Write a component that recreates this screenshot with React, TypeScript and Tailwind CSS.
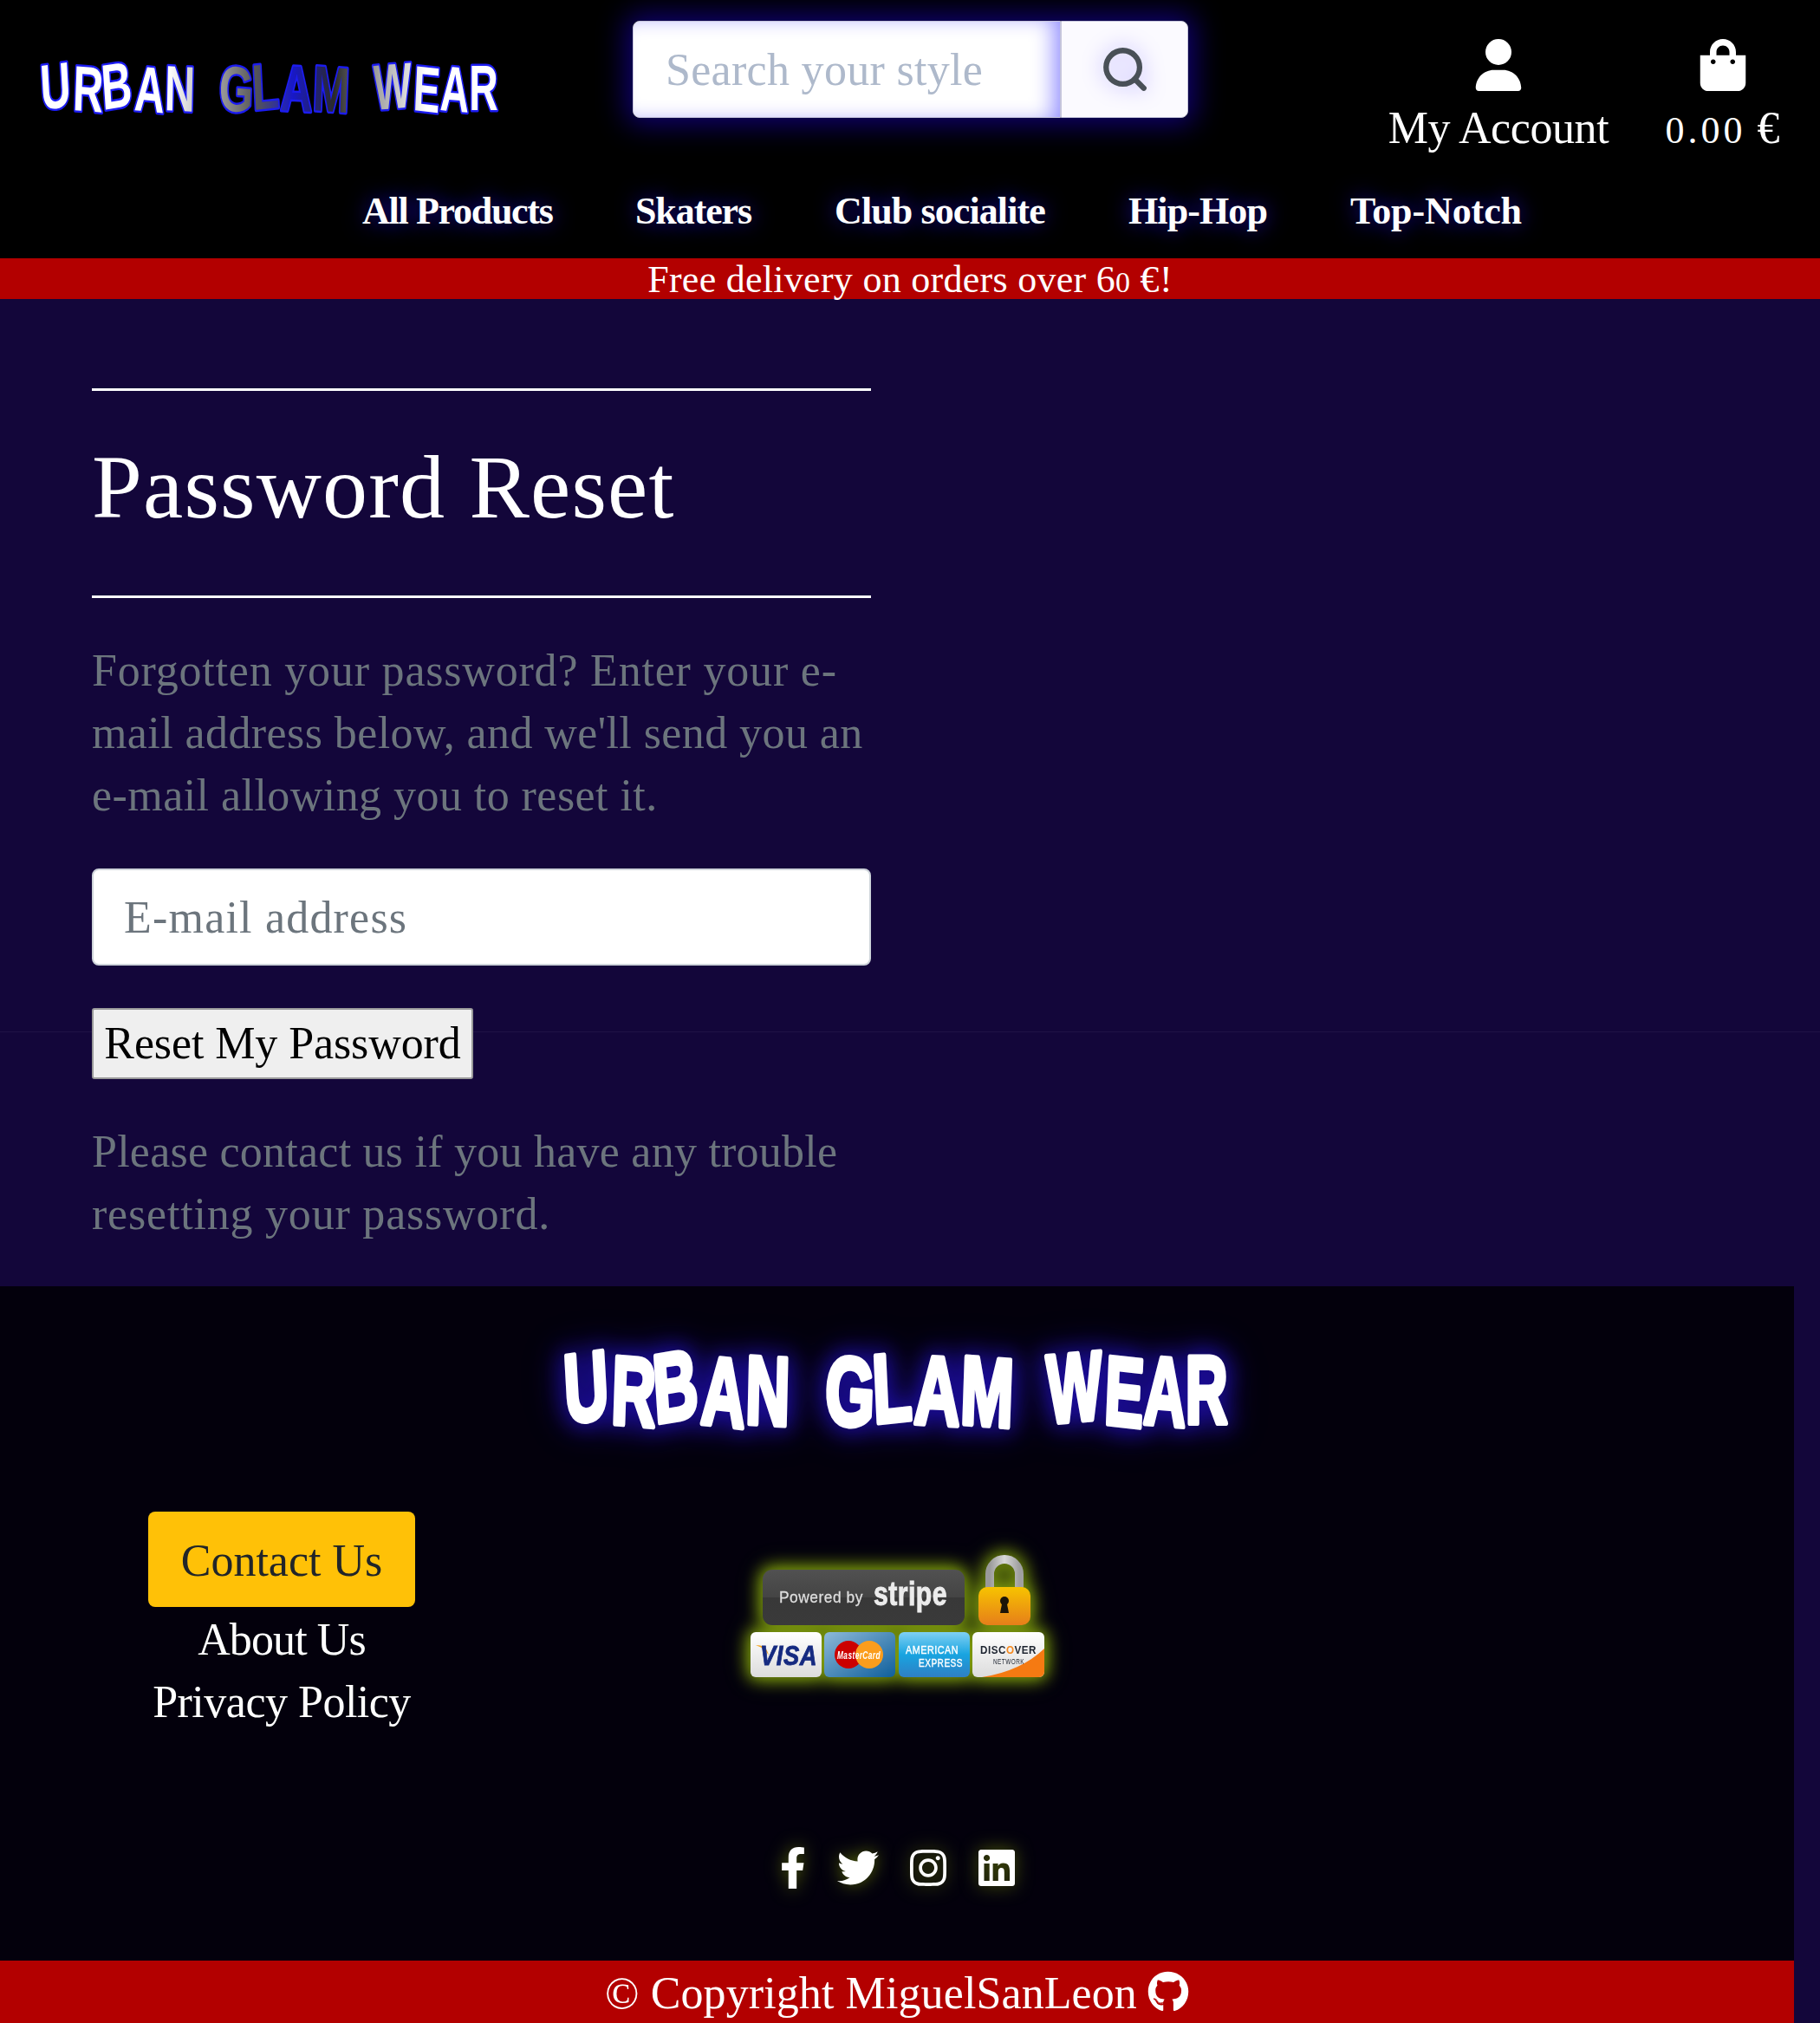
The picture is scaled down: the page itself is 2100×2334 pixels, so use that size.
import { FaShoppingBag, FaFacebookF, FaTwitter, FaInstagram, FaLinkedin, FaGithub } from "react-icons/fa";
import { FaUser } from "react-icons/fa6";
import { Search } from "lucide-react";

function Logo({ glow }: { glow: boolean }) {
  const w = glow ? 772 : 532;
  const h = glow ? 97 : 67;
  const fs = glow ? 112 : 74;
  const base = glow ? 87 : 57;
  const id = glow ? "lgF" : "lgH";
  const words = glow
    ? [
        { t: "URBAN", x: 4, l: 258, r: "-5 3 -6 4 2" },
        { t: "GLAM", x: 302, l: 218, r: "3 -4 2 3" },
        { t: "WEAR", x: 560, l: 208, r: "-3 4 3 0" },
      ]
    : [
        { t: "URBAN", x: 3, l: 177, r: "-5 3 -6 4 2" },
        { t: "GLAM", x: 207, l: 151, r: "3 -4 2 3" },
        { t: "WEAR", x: 387, l: 143, r: "-3 4 3 0" },
      ];
  return (
    <svg
      width={w}
      height={h}
      viewBox={`0 0 ${w} ${h}`}
      className={glow ? "overflow-visible [filter:drop-shadow(0_0_12px_#1c0c9c)_drop-shadow(0_0_16px_#160a80)]" : "overflow-visible"}
    >
      <defs>
        <linearGradient id={id} gradientUnits="userSpaceOnUse" x1="0" x2={w} y1="0" y2="0">
          <stop offset="0" stopColor="#ffffff" />
          <stop offset="0.28" stopColor="#ffffff" />
          <stop offset="0.37" stopColor="#b0b0b0" />
          <stop offset="0.47" stopColor="#555555" />
          <stop offset="0.55" stopColor="#1818c8" />
          <stop offset="0.64" stopColor="#2a2a2a" />
          <stop offset="0.74" stopColor="#a8a8a8" />
          <stop offset="0.84" stopColor="#ffffff" />
        </linearGradient>
      </defs>
      {words.map((wd) => (
        <text
          key={wd.t}
          x={wd.x}
          y={base}
          textLength={wd.l}
          lengthAdjust="spacingAndGlyphs"
          fontFamily="'Liberation Sans', sans-serif"
          fontWeight={700}
          fontSize={fs}
          rotate={wd.r}
          fill={glow ? "#ffffff" : `url(#${id})`}
          stroke={glow ? "#ffffff" : "#1c1cf0"}
          strokeWidth={glow ? 6 : 5}
          strokeLinejoin="round"
          paintOrder="stroke"
        >
          {wd.t}
        </text>
      ))}
    </svg>
  );
}

function StripeBadge() {
  const sans = "'Liberation Sans', sans-serif";
  return (
    <svg width="339" height="143" viewBox="0 0 339 143" className="[filter:drop-shadow(0_0_10px_#7f9a0f)_drop-shadow(0_0_8px_#5f7a08)]">
      <defs>
        <linearGradient id="bd" x1="0" x2="0" y1="0" y2="1">
          <stop offset="0" stopColor="#515151" />
          <stop offset="0.5" stopColor="#444444" />
          <stop offset="0.5" stopColor="#383838" />
          <stop offset="1" stopColor="#3a3a3a" />
        </linearGradient>
        <linearGradient id="lk" x1="0" x2="0" y1="0" y2="1">
          <stop offset="0" stopColor="#f7c300" />
          <stop offset="1" stopColor="#e67e1a" />
        </linearGradient>
        <linearGradient id="sh" x1="0" x2="1" y1="0" y2="0">
          <stop offset="0" stopColor="#9a9a9a" />
          <stop offset="0.5" stopColor="#d8d8d8" />
          <stop offset="1" stopColor="#a0a0a0" />
        </linearGradient>
        <linearGradient id="vs" x1="0" x2="0" y1="0" y2="1">
          <stop offset="0" stopColor="#ffffff" />
          <stop offset="1" stopColor="#dcdcdc" />
        </linearGradient>
        <linearGradient id="mc" x1="0" x2="1" y1="0" y2="1">
          <stop offset="0" stopColor="#8db9d8" />
          <stop offset="1" stopColor="#0f5f9c" />
        </linearGradient>
        <linearGradient id="ax" x1="0" x2="0" y1="0" y2="1">
          <stop offset="0" stopColor="#7fd0f4" />
          <stop offset="0.5" stopColor="#18a4e0" />
          <stop offset="1" stopColor="#2f7fc4" />
        </linearGradient>
      </defs>
      <rect x="14" y="19" width="233" height="64" rx="11" fill="url(#bd)" />
      <text x="33" y="57" textLength="97" lengthAdjust="spacingAndGlyphs" fontFamily={sans} fontSize="19" fontWeight={400} stroke="#dedede" strokeWidth="0.3" fill="#dedede">Powered by</text>
      <text x="142" y="60" textLength="85" lengthAdjust="spacingAndGlyphs" fontFamily={sans} fontWeight={700} fontSize="38" stroke="#ececec" strokeWidth="1" fill="#ececec">stripe</text>
      <path d="M276 44V24a17 17 0 0 1 34 0V44" fill="none" stroke="url(#sh)" strokeWidth="10" />
      <rect x="263" y="39" width="60" height="44" rx="10" fill="url(#lk)" />
      <circle cx="293" cy="55" r="5" fill="#1c1408" />
      <path d="M290.500 56h5l2.500 13h-10z" fill="#1c1408" />
      <rect x="0" y="91" width="82" height="52" rx="6" fill="url(#vs)" />
      <path d="M6 106c8 0 13 3 15 12 -3-6-7-9-15-12z" fill="#f5a21a" />
      <text x="11" y="129" textLength="66" lengthAdjust="spacingAndGlyphs" fontFamily={sans} fontWeight={700} fontStyle="italic" fontSize="31" stroke="#152a80" strokeWidth="0.8" fill="#152a80">VISA</text>
      <rect x="85" y="91" width="82" height="52" rx="6" fill="url(#mc)" />
      <circle cx="113" cy="117" r="16" fill="#cc0000" />
      <circle cx="137" cy="117" r="16" fill="#fb9d1d" />
      <text x="100" y="122" textLength="50" lengthAdjust="spacingAndGlyphs" fontFamily={sans} fontWeight={700} fontStyle="italic" fontSize="13" fill="#ffffff">MasterCard</text>
      <rect x="171" y="91" width="82" height="52" rx="6" fill="url(#ax)" />
      <text x="179" y="116" textLength="61" lengthAdjust="spacingAndGlyphs" fontFamily={sans} fontSize="13" stroke="#ffffff" strokeWidth="0.4" fill="#ffffff">AMERICAN</text>
      <text x="194" y="131" textLength="51" lengthAdjust="spacingAndGlyphs" fontFamily={sans} fontSize="13" stroke="#ffffff" strokeWidth="0.4" fill="#ffffff">EXPRESS</text>
      <rect x="256" y="91" width="83" height="52" rx="6" fill="url(#vs)" />
      <path d="M267 143Q312 136 339 110V137a6 6 0 0 1-6 6z" fill="#f57a12" />
      <text x="265" y="116" textLength="65" lengthAdjust="spacingAndGlyphs" fontFamily={sans} fontWeight={700} fontSize="13.500" fill="#1d2430">
        DISC<tspan fill="#f58a20">O</tspan>VER
      </text>
      <text x="280" y="128" textLength="36" lengthAdjust="spacingAndGlyphs" fontFamily={sans} fontSize="8.500" fill="#1d2430">NETWORK</text>
    </svg>
  );
}

const navItems = [
  { label: "All Products", cls: "w-[219px] tracking-[-1.3px]" },
  { label: "Skaters", cls: "w-[134px] tracking-[-1.1px]" },
  { label: "Club socialite", cls: "w-[243px] tracking-[-0.9px]" },
  { label: "Hip-Hop", cls: "w-[160px] tracking-[-0.9px]" },
  { label: "Top-Notch", cls: "w-[195px] tracking-[-0.1px]" },
];

const glowSocial = "[filter:drop-shadow(0_0_10px_#4e5c08)]";

export default function App() {
  return (
    <div className="relative min-h-[2334px] w-[2100px] bg-[#13063a] font-['Liberation_Serif',serif] text-[52px] leading-[72px] tracking-[0.6px] text-white">
      <header className="flex h-[298px] flex-col bg-black">
        <div className="flex h-[194px]">
          <div className="ml-[45px] mt-[70px] w-[532px]">
            <Logo glow={false} />
          </div>
          <div className="ml-[153px] mt-[24px] flex h-[112px] w-[641px] rounded-lg shadow-[0_0_32px_8px_rgba(20,0,150,0.75)]">
            <input
              placeholder="Search your style"
              className="h-full w-[494px] rounded-l-lg border border-[#c5c5dc] bg-white pl-[37px] text-[52px] tracking-[0.3px] shadow-[inset_-14px_0_26px_-8px_#8c88ff] outline-none placeholder:text-[#aeb9cb]"
            />
            <div className="flex h-full flex-1 items-center justify-center rounded-r-lg border border-[#c5c5dc] bg-[#fbfaff]">
              <Search size={58} strokeWidth={2.6} className="text-[#495057] [filter:drop-shadow(0_0_12px_#b4aaff)]" />
            </div>
          </div>
          <div className="ml-[233px] mt-[45px] flex w-[250px] flex-col items-center">
            <FaUser className="text-[60px]" />
            <span className="mt-[7px] whitespace-nowrap tracking-[-0.4px]">My Account</span>
          </div>
          <div className="ml-[65px] mt-[45px] flex w-[137px] flex-col items-center">
            <FaShoppingBag className="text-[60px]" />
            <span className="mt-[7px] whitespace-nowrap tracking-[0px]">
              <span className="text-[44px] tracking-[4px]">0.00</span> €
            </span>
          </div>
        </div>
        <nav className="flex gap-[96px] pl-[418px] pt-[14px] font-bold [text-shadow:0_0_24px_#1c0cb0]">
          {navItems.map((n) => (
            <span key={n.label} className={`${n.cls} whitespace-nowrap text-[44px]`}>{n.label}</span>
          ))}
        </nav>
      </header>
      <div className="flex h-[47px] items-center justify-center bg-[#b30000] pt-[5px] text-[44px] tracking-[0.28px]">
        <span>Free delivery on orders over 6<span className="text-[34px]">0</span> €!</span>
      </div>

      <main className="relative flex h-[1139px] flex-col px-[106px] pt-[103px]">
        <div className="absolute left-0 right-0 top-[845px] h-px bg-[#1f1345]" />
        <div className="relative w-[899px]">
          <div className="h-[3px] bg-white" />
          <h1 className="pb-[47px] pt-[33px] text-[104px] leading-[156px] tracking-[1.2px]">Password Reset</h1>
          <div className="h-[3px] bg-white" />
          <p className="mt-[48px] text-[#6c757d]">
            <span className="tracking-[0.8px]">Forgotten your password? Enter your e-</span>
            <br />
            <span className="tracking-[0.42px]">mail address below, and we'll send you an</span>
            <br />
            <span className="tracking-[0.45px]">e-mail allowing you to reset it.</span>
          </p>
          <input
            placeholder="E-mail address"
            className="mt-[48px] block h-[112px] w-full rounded-lg border-2 border-[#ced4da] bg-white pl-[35px] text-[52px] tracking-[1.2px] placeholder:text-[#6c757d]"
          />
          <button className="mt-[49px] block h-[82px] w-[440px] rounded-[3px] border-2 border-[#9a9a9a] bg-[#efefef] text-center tracking-[-0.1px] text-black">
            Reset My Password
          </button>
          <p className="mt-[48px] text-[#6c757d]">
            <span className="tracking-[0.24px]">Please contact us if you have any trouble</span>
            <br />
            <span className="tracking-[0.8px]">resetting your password.</span>
          </p>
        </div>
      </main>

      <footer className="flex h-[850px] w-[2070px] flex-col bg-[#03000c]">
        <div className="mt-[71px] flex justify-center">
          <Logo glow />
        </div>
        <div className="mt-[92px] grid grid-cols-[650px_770px_650px]">
          <div className="flex flex-col items-center">
            <a className="flex h-[110px] w-[308px] items-center justify-center rounded-lg bg-[#ffc107] pt-[3px] tracking-[0px] text-[#212529]">Contact Us</a>
            <a className="mt-[2px] tracking-[-0.9px]">About Us</a>
            <a className="tracking-[-0.5px]">Privacy Policy</a>
          </div>
          <div className="flex justify-center pt-[48px]">
            <StripeBadge />
          </div>
        </div>
        <div className="mt-[131px] flex h-[48px] items-center justify-center pr-[6px]">
          <FaFacebookF className={`text-[48px] ${glowSocial}`} />
          <FaTwitter className={`ml-[27px] text-[48px] ${glowSocial}`} />
          <FaInstagram className={`ml-[33px] text-[48px] ${glowSocial}`} />
          <FaLinkedin className={`ml-[31px] text-[48px] ${glowSocial}`} />
        </div>
        <div className="mt-auto flex h-[72px] items-center justify-center gap-[12px] bg-[#b30000]">
          <span className="pt-[3px] tracking-[0.1px]">© Copyright MiguelSanLeon</span>
          <FaGithub className="text-[48px]" />
        </div>
      </footer>
    </div>
  );
}
